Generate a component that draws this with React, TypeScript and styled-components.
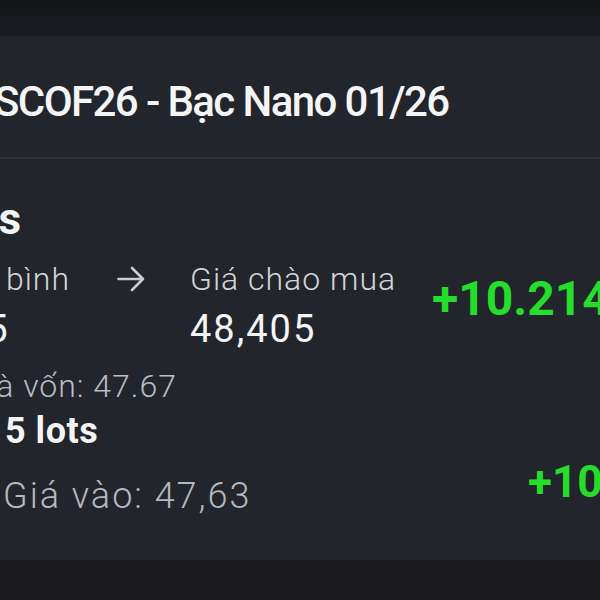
import React from 'react'
import styled, { createGlobalStyle } from 'styled-components'

const GlobalStyle = createGlobalStyle`
  html, body {
    margin: 0;
    padding: 0;
    background: #18191e;
  }
  body {
    font-family: Roboto, "Noto Sans", sans-serif;
    -webkit-font-smoothing: antialiased;
  }
`

const Screen = styled.div`
  width: 600px;
  height: 600px;
  overflow: hidden;
  display: flex;
  flex-direction: column;
  background: #18191e;
`

const TopBand = styled.div`
  flex: none;
  height: 36px;
  background: linear-gradient(#141519, #1b1c21);
`

const BottomBand = styled.div`
  flex: 1;
  background: #19191e;
`

const Card = styled.section`
  flex: none;
  height: 524px;
  background: #22252b;
  display: flex;
  flex-direction: column;
  overflow: hidden;
`

const Header = styled.header`
  flex: none;
  height: 123px;
  box-sizing: border-box;
  padding-top: 10px;
  display: flex;
  align-items: center;
  border-bottom: 2px solid #2d3037;
`

const Title = styled.h1`
  margin: 0 0 0 -6px;
  font-size: 42px;
  line-height: 50px;
  font-weight: 500;
  letter-spacing: -1.6px;
  color: #f4f5f7;
  white-space: nowrap;
`

const Body = styled.div`
  display: flex;
  flex-direction: column;
  padding-top: 36px;
`

/* keeps the right edge of its content at $end px, the rest runs off the left side */
const ClipEnd = styled.div<{ $end: number }>`
  flex: none;
  width: ${({ $end }) => $end}px;
  display: flex;
  justify-content: flex-end;
  white-space: nowrap;
`

const Heading = styled.div<{ $size: number }>`
  font-size: ${({ $size }) => $size}px;
  line-height: 48px;
  font-weight: 700;
  color: #f4f5f7;
  white-space: nowrap;
`

const PriceRow = styled.div`
  display: flex;
  align-items: flex-start;
  margin-top: 16px;
`

const Stack = styled.div`
  display: flex;
  flex-direction: column;
  align-items: flex-start;
`

const Label = styled.div`
  font-size: 32px;
  line-height: 40px;
  font-weight: 300;
  letter-spacing: 1px;
  color: #d2d4da;
  white-space: nowrap;
`

const Value = styled.div`
  margin-top: 7px;
  font-size: 38px;
  line-height: 46px;
  font-weight: 400;
  letter-spacing: 2px;
  color: #f4f5f7;
  white-space: nowrap;
`

const ArrowBox = styled.div`
  flex: none;
  height: 40px;
  display: flex;
  align-items: center;
  margin: 0 45px 0 47px;
`

const Profit = styled.div<{ $size: number; $lift: number }>`
  margin-left: 36px;
  align-self: center;
  margin-top: ${({ $lift }) => -$lift}px;
  font-size: ${({ $size }) => $size}px;
  line-height: ${({ $size }) => $size}px;
  font-weight: 700;
  color: #27dd2b;
  white-space: nowrap;
`

const Note = styled.div`
  margin-top: 14px;
  font-size: 32px;
  line-height: 40px;
  font-weight: 300;
  letter-spacing: 1px;
  color: #b9bcc2;
`

const Lots = styled.div`
  margin: 3px 0 0 5px;
  font-size: 36px;
  line-height: 44px;
  font-weight: 700;
  letter-spacing: 0.5px;
  color: #f4f5f7;
`

const EntryRow = styled.div`
  display: flex;
  align-items: flex-start;
  justify-content: space-between;
  margin-top: 21px;
  padding-left: 3px;
`

const Entry = styled.div`
  font-size: 36px;
  line-height: 44px;
  font-weight: 300;
  letter-spacing: 2px;
  color: #b5b8be;
  white-space: nowrap;
`

const EntryProfit = styled(Profit)`
  flex: none;
  margin-left: 0;
  align-self: flex-start;
  margin-right: -91px;
`

const Arrow = () => (
  <svg width="28" height="26" viewBox="0 0 28 26" fill="none">
    <path
      d="M1.5 13H26M15 2l11 11-11 11"
      stroke="#c9ccd2"
      strokeWidth="2.6"
      strokeLinecap="round"
      strokeLinejoin="round"
    />
  </svg>
)

export default function App() {
  return (
    <Screen>
      <GlobalStyle />
      <TopBand />
      <Card>
        <Header>
          <Title>SCOF26 - Bạc Nano 01/26</Title>
        </Header>
        <Body>
          <ClipEnd $end={21}>
            <Heading $size={44}>Tổng 15 lots</Heading>
          </ClipEnd>
          <PriceRow>
            <ClipEnd $end={70}>
              <Stack>
                <Label>Giá trung bình</Label>
                <Value>47,6325</Value>
              </Stack>
            </ClipEnd>
            <ArrowBox>
              <Arrow />
            </ArrowBox>
            <Stack>
              <Label>Giá chào mua</Label>
              <Value>48,405</Value>
            </Stack>
            <Profit $size={48} $lift={14}>+10.214.000</Profit>
          </PriceRow>
          <ClipEnd $end={177}>
            <Note>Giá hoà vốn: 47.67</Note>
          </ClipEnd>
          <Lots>5 lots</Lots>
          <EntryRow>
            <Entry>Giá vào: 47,63</Entry>
            <EntryProfit $size={44} $lift={14}>+10.000</EntryProfit>
          </EntryRow>
        </Body>
      </Card>
      <BottomBand />
    </Screen>
  )
}
